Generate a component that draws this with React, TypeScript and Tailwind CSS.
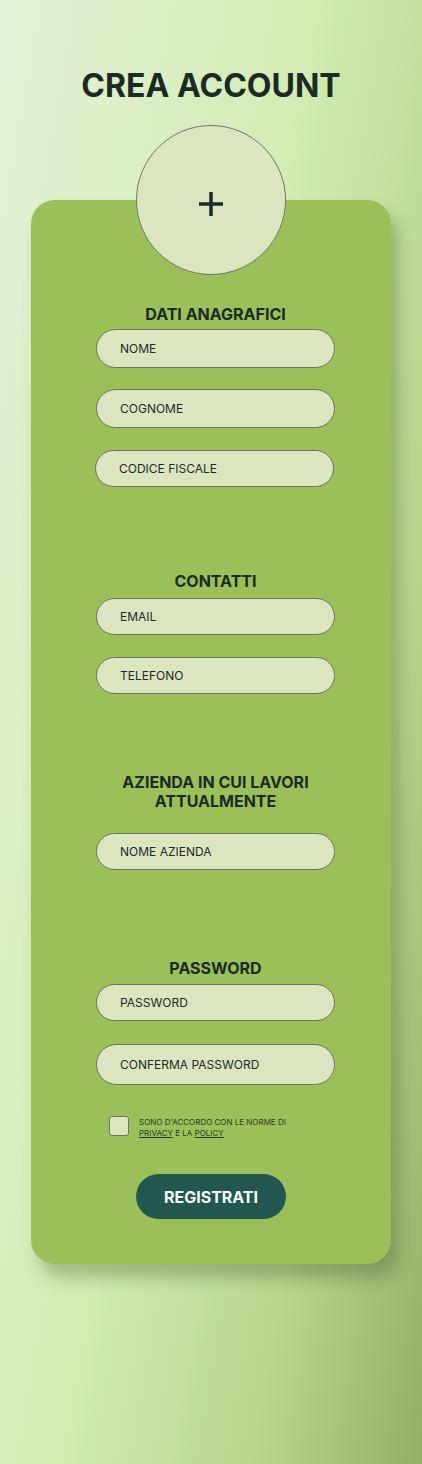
const font = { fontFamily: "Inter, 'Noto Sans', sans-serif" };

const Field = ({ label, className = "" }: { label: string; className?: string }) => (
	<div
		className={`flex items-center w-[239px] rounded-full bg-[#dbe6c1] border border-[#6f6f6f] pl-[23px] text-[12px] text-[#1f2a26] ${className}`}
	>
		{label}
	</div>
);

const Heading = ({ children, className = "" }: { children: React.ReactNode; className?: string }) => (
	<h2 className={`w-[239px] text-center text-[16px] leading-[19px] font-bold text-[#1b2a27] ${className}`}>{children}</h2>
);

export default function App() {
	return (
		<div
			style={font}
			className="min-h-[1464px] w-full bg-[linear-gradient(100deg,#e4f0d8_0%,#d3edb3_45%,#b9d58f_75%,#93ae68_100%)] pt-[66px]"
		>
			<h1 className="text-center text-[32px] leading-[39px] font-bold text-[#1b2a27]">CREA ACCOUNT</h1>

			<div className="relative z-10 mx-auto mt-[20px] flex h-[150px] w-[150px] items-center justify-center rounded-full border border-[#737373] bg-[#dbe6c1]">
				<svg width="26" height="26" viewBox="0 0 26 26" className="mt-[8px]">
					<path d="M13 1v24M1 13h24" stroke="#1b2a27" strokeWidth="3.5" />
				</svg>
			</div>

			<div className="-mt-[75px] ml-[31px] w-[360px] rounded-[24px] bg-[#9bc057] pt-[105px] pb-[45px] pl-[65px] shadow-[8px_14px_16px_rgba(40,60,20,0.28)]">
				<Heading>DATI ANAGRAFICI</Heading>
				<Field label="NOME" className="mt-[5px] h-[39px]" />
				<Field label="COGNOME" className="mt-[21px] h-[39px]" />
				<Field label="CODICE FISCALE" className="mt-[22px] -ml-[1px] h-[37px]" />

				<Heading className="mt-[85px]">CONTATTI</Heading>
				<Field label="EMAIL" className="mt-[7px] h-[37px]" />
				<Field label="TELEFONO" className="mt-[22px] h-[37px]" />

				<Heading className="mt-[79px]">
					AZIENDA IN CUI LAVORI
					<br />
					ATTUALMENTE
				</Heading>
				<Field label="NOME AZIENDA" className="mt-[22px] h-[37px]" />

				<Heading className="mt-[89px]">PASSWORD</Heading>
				<Field label="PASSWORD" className="mt-[6px] h-[37px]" />
				<Field label="CONFERMA PASSWORD" className="mt-[23px] h-[41px]" />

				<div className="mt-[31px] ml-[13px] flex items-start gap-[10px]">
					<div className="h-[20px] w-[20px] shrink-0 rounded-[3px] border border-[#6f6f6f] bg-[#dbe6c1]" />
					<p className="pt-[1px] text-[8px] leading-[11px] text-[#2a3a2c]">
						SONO D'ACCORDO CON LE NORME DI
						<br />
						<span className="underline">PRIVACY</span> E LA <span className="underline">POLICY</span>
					</p>
				</div>

				<button className="mt-[35px] ml-[40px] flex h-[45px] w-[150px] items-center justify-center rounded-full bg-[#22574f] text-[16px] font-bold text-white">
					REGISTRATI
				</button>
			</div>
		</div>
	);
}
